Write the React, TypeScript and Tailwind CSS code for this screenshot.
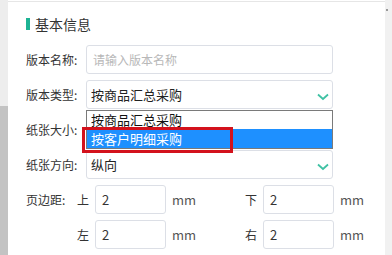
import React from "react";

const font = { fontFamily: '"Noto Sans CJK SC", "Liberation Sans", sans-serif' };

function Chevron() {
  return (
    <svg width="12" height="8" viewBox="0 0 12 8" className="absolute right-[3px] top-[12px]">
      <path d="M1 1.5 L6 6 L11 1.5" fill="none" stroke="#3fc2a4" strokeWidth="1.8" />
    </svg>
  );
}

function Row({ label, children }: { label: string; children: React.ReactNode }) {
  return (
    <div className="flex items-center h-[29px]">
      <div className="w-[60px] text-[12px] text-[#333] whitespace-nowrap">{label}</div>
      {children}
    </div>
  );
}

function Select({ value, children }: { value: string; children?: React.ReactNode }) {
  return (
    <div className="relative w-[247px] h-[29px] border border-[#dcdfe6] rounded-[3px] flex items-center pl-[4px] text-[13px] text-[#222]">
      {value}
      <Chevron />
      {children}
    </div>
  );
}

function Margin({ side }: { side: string }) {
  return (
    <div className="flex items-center">
      <span className="text-[12px] text-[#333] mr-[6px]">{side}</span>
      <div className="w-[71px] h-[29px] border border-[#dcdfe6] rounded-[3px] flex items-center pl-[6px] text-[13px] text-[#333]">
        2
      </div>
      <span className="ml-[6px] w-[22px] text-[13px] text-[#555]">mm</span>
    </div>
  );
}

export default function App() {
  return (
    <div className="w-[392px] h-[255px] overflow-hidden flex bg-white" style={font}>
      <div className="w-[8px] flex flex-col">
        <div className="h-[106px] bg-[#ededed]" />
        <div className="flex-1 bg-[#c3c3c3]" />
      </div>
      <div className="flex-1 mt-px border-t border-[#e6e6e6] pl-[18px] pt-[13px]">
        <div className="flex items-center h-[18px] mb-[12px]">
          <div className="w-[4px] h-[12px] bg-[#1db394] mr-[5px]" />
          <span className="text-[14px] text-[#333]">基本信息</span>
        </div>
        <div className="flex flex-col gap-[6px]">
          <Row label="版本名称:">
            <div className="w-[247px] h-[29px] border border-[#dcdfe6] rounded-[3px] flex items-center pl-[6px] text-[12px] text-[#b8b8b8]">
              请输入版本名称
            </div>
          </Row>
          <div className="relative z-10">
            <Row label="版本类型:">
              <Select value="按商品汇总采购">
                <div className="absolute left-[-1px] right-[-1px] top-[29px] border border-[#7a7a7a] bg-white text-[13px]">
                  <div className="h-[18px] flex items-center pl-[4px] text-[#111]">按商品汇总采购</div>
                  <div className="h-[19px] flex items-center pl-[4px] bg-[#1e90ff] text-white">按客户明细采购</div>
                  <div className="absolute left-[-5px] top-[16px] w-[151px] h-[26px] border-[3px] border-[#d3121c]" />
                </div>
              </Select>
            </Row>
          </div>
          <Row label="纸张大小:">
            <Select value="" />
          </Row>
          <Row label="纸张方向:">
            <Select value="纵向" />
          </Row>
          <div className="flex items-center h-[29px] w-[336px]">
            <span className="w-[51px] text-[12px] text-[#333]">页边距:</span>
            <Margin side="上" />
            <div className="flex-1" />
            <Margin side="下" />
          </div>
          <div className="flex items-center h-[29px] w-[336px] pl-[51px]">
            <Margin side="左" />
            <div className="flex-1" />
            <Margin side="右" />
          </div>
          <Row label="">
            <div className="w-[247px] h-[29px] border border-[#dcdfe6] rounded-[3px]" />
          </Row>
        </div>
      </div>
      <div className="w-[7px] bg-[#f1f1f1] relative">
        <div className="absolute left-[1px] top-[9px] w-[2px] h-[2px] bg-[#999]" />
      </div>
    </div>
  );
}
